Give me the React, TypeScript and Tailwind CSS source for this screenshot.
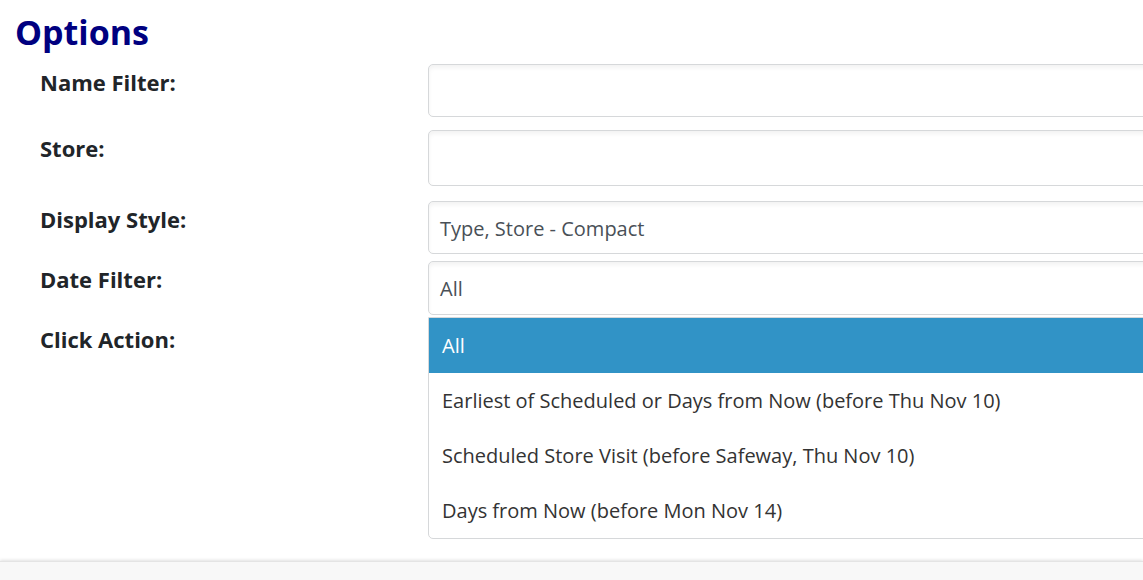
const rows = [
  { label: 'Name Filter:', value: '', h: 'h-[53px]', mb: 'mb-[13px]' },
  { label: 'Store:', value: '', h: 'h-[56px]', mb: 'mb-[15px]' },
  { label: 'Display Style:', value: 'Type, Store - Compact', h: 'h-[53px]', mb: 'mb-[7px]' },
  { label: 'Date Filter:', value: 'All', h: 'h-[54px]', mb: 'mb-[6px]', open: true },
  { label: 'Click Action:', value: '', h: 'h-[54px]', mb: 'mb-[6px]' },
];

const options = [
  'All',
  'Earliest of Scheduled or Days from Now (before Thu Nov 10)',
  'Scheduled Store Visit (before Safeway, Thu Nov 10)',
  'Days from Now (before Mon Nov 14)',
];

export default function App() {
  return (
    <div
      className="w-[1143px] h-[580px] overflow-hidden bg-white flex flex-col"
      style={{ fontFamily: '"Open Sans", "Noto Sans", Arial, sans-serif' }}
    >
      <div className="h-[561px] shrink-0 pl-[15px] pt-[10px]">
        <h1 className="text-[34px] leading-[44px] font-bold text-[#000080] mb-[10px]">Options</h1>
        <div className="pl-[25px]">
          {rows.map((r) => (
            <div key={r.label} className={`flex ${r.mb}`}>
              <div className="w-[388px] shrink-0 pt-[3px] text-[22px] leading-[30px] font-bold text-[#212529]">
                {r.label}
              </div>
              <div className="relative">
                <div
                  className={`w-[760px] ${r.h} border border-[#d6d8da] rounded-[5px] bg-white shadow-[inset_0_3px_4px_rgba(0,0,0,0.05)] flex items-center px-[11px] pt-[2px] text-[20px] text-[#495057]`}
                >
                  {r.value}
                </div>
                {r.open && (
                  <div className="absolute left-0 top-[56px] z-10 w-[760px] bg-white border border-[#d6d8da] rounded-b-[5px] overflow-hidden">
                    {options.map((o, i) => (
                      <div
                        key={o}
                        className={`h-[55px] flex items-center px-[13px] text-[20px] ${
                          i === 0 ? 'bg-[#3193c6] text-white' : 'text-[#333]'
                        }`}
                      >
                        {o}
                      </div>
                    ))}
                  </div>
                )}
              </div>
            </div>
          ))}
        </div>
      </div>
      <div className="flex-1 bg-[#f8f8f8] shadow-[0_-1px_3px_rgba(0,0,0,0.12)] border-t border-[#e4e4e4]" />
    </div>
  );
}
